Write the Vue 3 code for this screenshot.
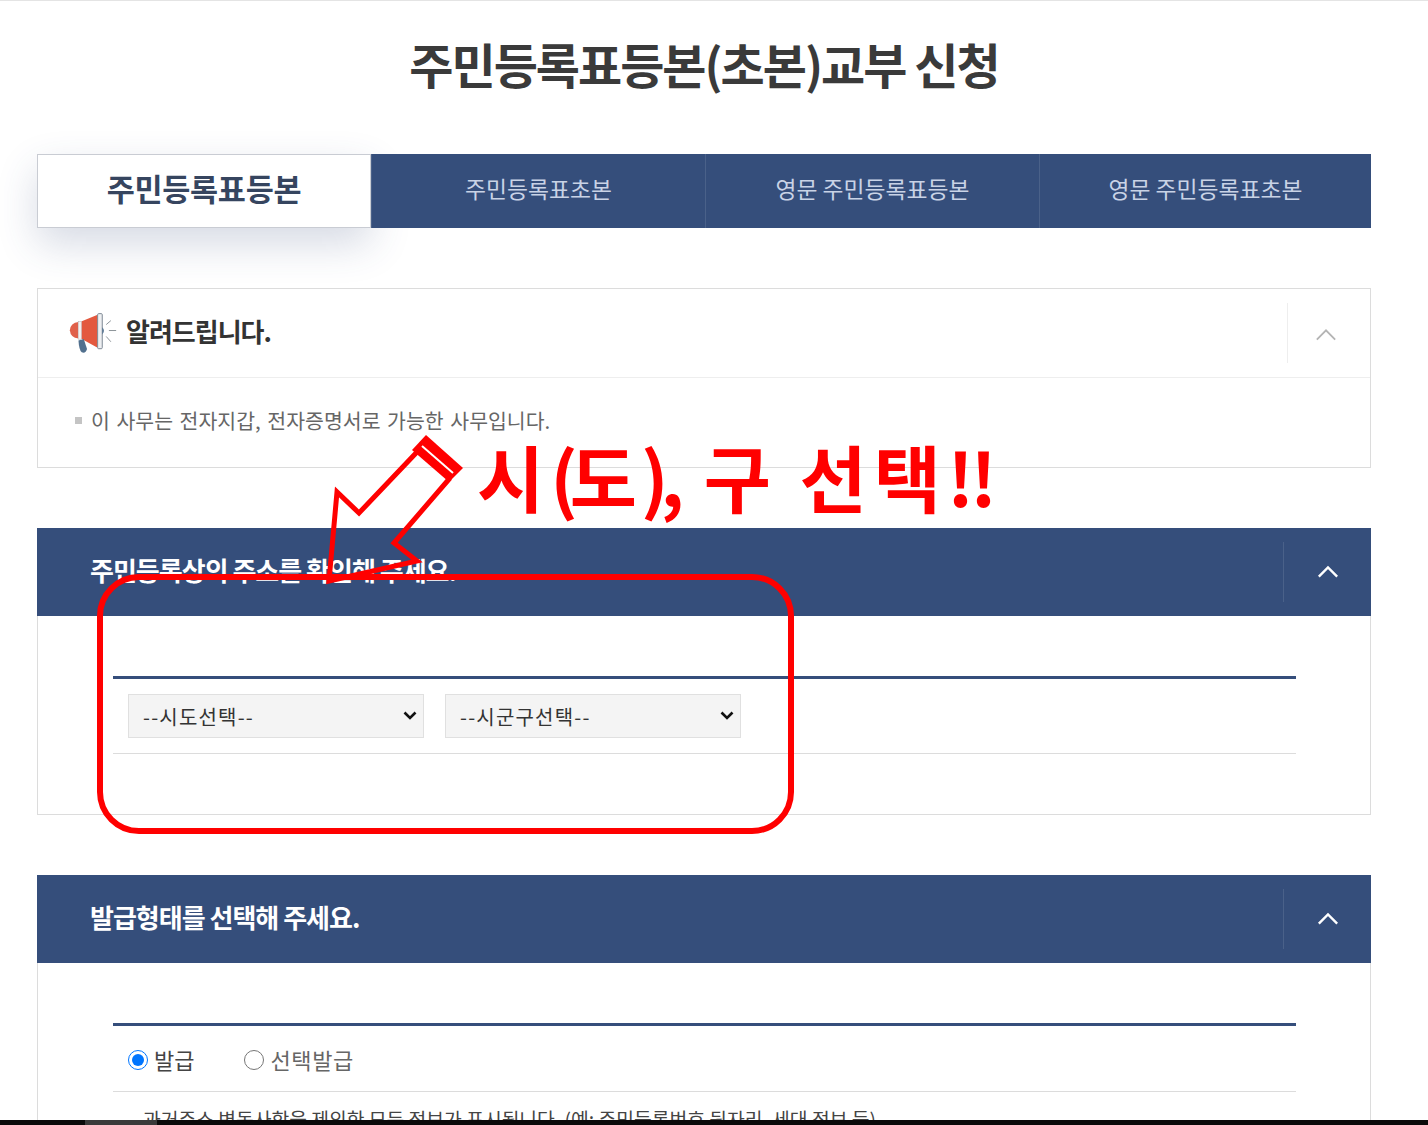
<script setup>
const tabs = [
  { label: '주민등록표등본', active: true },
  { label: '주민등록표초본', active: false },
  { label: '영문 주민등록표등본', active: false },
  { label: '영문 주민등록표초본', active: false }
]
</script>

<template>
  <div class="page">
    <main class="content">
      <h1 class="title">주민등록표등본(초본)교부 신청</h1>

      <nav class="tabs">
        <a v-for="tab in tabs" :key="tab.label" class="tab" :class="{ active: tab.active }">{{ tab.label }}</a>
      </nav>

      <section class="notice">
        <header class="notice-head">
          <svg class="horn" viewBox="25 20 150 130">
            <path d="M56 50 Q32 52 30 75 Q32 98 56 100Z" fill="#e0604a" />
            <rect x="55" y="48" width="11" height="54" fill="#f5f0ee" stroke="#8a9098" stroke-width="1" />
            <path d="M66 48 L114 28 L114 128 L66 102Z" fill="#e3593f" />
            <path d="M56 106 L72 102 L82 132 Q78 146 66 142 Q58 136 56 106Z" fill="#51708e" />
            <rect x="114" y="25" width="14" height="106" rx="3" fill="#eef0f2" stroke="#7d8793" stroke-width="3" />
            <path d="M128 66 Q138 76 128 88Z" fill="#51708e" />
            <path d="M140 58 L154 46 M148 76 L170 76 M140 94 L154 110" stroke="#8d9499" stroke-width="3" fill="none" />
          </svg>
          <h2 class="notice-title">알려드립니다.</h2>
          <div class="notice-toggle">
            <svg class="chev" viewBox="0 0 24 14"><path d="M2 12 L12 2 L22 12" /></svg>
          </div>
        </header>
        <div class="notice-body">
          <p class="notice-line">이 사무는 전자지갑, 전자증명서로 가능한 사무입니다.</p>
        </div>
      </section>

      <section class="panel">
        <header class="panel-head">
          <h2 class="panel-title">주민등록상의 주소를 확인해 주세요.</h2>
          <div class="panel-toggle">
            <svg class="chev light" viewBox="0 0 24 14"><path d="M2 12 L12 2 L22 12" /></svg>
          </div>
        </header>
        <div class="panel-body">
          <div class="form-row selects">
            <div class="sel-wrap">
              <select class="sel"><option>--시도선택--</option></select>
              <svg class="sel-arrow" viewBox="0 0 14 9"><path d="M1.5 1.5 L7 7 L12.5 1.5" /></svg>
            </div>
            <div class="sel-wrap">
              <select class="sel"><option>--시군구선택--</option></select>
              <svg class="sel-arrow" viewBox="0 0 14 9"><path d="M1.5 1.5 L7 7 L12.5 1.5" /></svg>
            </div>
          </div>
        </div>
      </section>

      <section class="panel last">
        <header class="panel-head">
          <h2 class="panel-title">발급형태를 선택해 주세요.</h2>
          <div class="panel-toggle">
            <svg class="chev light" viewBox="0 0 24 14"><path d="M2 12 L12 2 L22 12" /></svg>
          </div>
        </header>
        <div class="panel-body">
          <div class="form-row radios">
            <label class="radio"><input type="radio" name="kind" checked />발급</label>
            <label class="radio"><input type="radio" name="kind" />선택발급</label>
          </div>
          <p class="hint">과거주소 변동사항을 제외한 모든 정보가 표시됩니다. (예: 주민등록번호 뒷자리, 세대 정보 등)</p>
        </div>
      </section>
    </main>

    <footer class="taskbar"><span class="taskbar-seg"></span></footer>

    <!-- Annotation drawn over the screenshot -->
    <svg class="arrow" viewBox="0 0 1428 1125">
      <path class="arrow-line" d="M417 452 L359 513 L337 492 L329 581 L417 561 L394 543 L450 478" />
      <path d="M426 435 L463 468 L449 482 L412 450Z" fill="#ff0000" />
      <path d="M422 446 L453 473" stroke="#fff" stroke-width="2" fill="none" />
    </svg>
    <div class="callout">시<span class="c-paren">(</span><span class="c-do">도</span><span class="c-paren">)</span><span class="c-comma">,</span> 구 <span class="c-seon">선</span>택<span class="c-bang">!</span>!</div>
    <div class="highlight"></div>
  </div>
</template>

<style>
body { margin: 0; background: #fff; }
</style>

<style scoped>
* { box-sizing: border-box; }
.page {
  position: relative;
  width: 1428px;
  height: 1125px;
  overflow: hidden;
  display: flex;
  flex-direction: column;
  background: #fff;
  border-top: 1px solid #e4e4e4;
  font-family: "Noto Sans CJK KR", "Noto Sans", sans-serif;
  color: #333;
}
.content {
  flex: 1;
  min-height: 0;
  overflow: hidden;
  padding: 0 57px 0 37px;
}
.title {
  margin: 0;
  padding-top: 30px;
  height: 153px;
  font-size: 48px;
  line-height: 64px;
  font-weight: 700;
  text-align: center;
  color: #3a3a3a;
  letter-spacing: -2px;
}
.tabs {
  display: grid;
  grid-template-columns: 334px 334px 334px 332px;
  height: 74px;
  margin-bottom: 60px;
}
.tab {
  display: flex;
  align-items: center;
  justify-content: center;
  font-size: 22.8px;
  color: #c9d3e6;
  background: #354e7b;
  border-left: 1px solid #4a6189;
  padding-bottom: 6px;
}
.tab.active {
  background: #fff;
  border: 1px solid #c9ccd3;
  color: #36455f;
  font-size: 30.5px;
  font-weight: 700;
  letter-spacing: -0.3px;
  box-shadow: 0 16px 40px rgba(50, 70, 120, 0.2);
}
.notice {
  height: 180px;
  border: 1px solid #dcdcdc;
  margin-bottom: 60px;
}
.notice-head {
  display: flex;
  align-items: center;
  height: 89px;
  padding-left: 30px;
  border-bottom: 1px solid #eeeeee;
}
.horn { width: 50px; height: 43px; margin-right: 8px; }
.notice-title {
  flex: 1;
  margin: 0;
  padding-bottom: 6px;
  font-size: 26px;
  font-weight: 700;
  letter-spacing: -1px;
  color: #333;
}
.notice-toggle {
  width: 83px;
  height: 60px;
  border-left: 1px solid #eeeeee;
  display: flex;
  align-items: center;
  justify-content: center;
  padding-top: 3px;
  padding-right: 7px;
}
.chev { width: 22px; height: 14px; fill: none; stroke: #b4b4b4; stroke-width: 2; }
.chev.light { stroke: #fff; stroke-width: 2.6; }
.notice-body { padding: 27px 0 0 37px; }
.notice-line {
  position: relative;
  margin: 0;
  padding-left: 16px;
  font-size: 20.5px;
  line-height: 30px;
  word-spacing: 2px;
  color: #666;
}
.notice-line::before {
  content: "";
  position: absolute;
  left: 0;
  top: 12px;
  width: 7px;
  height: 7px;
  background: #c4c4c4;
}
.panel {
  border: 1px solid #dcdcdc;
  border-top: 0;
  height: 287px;
  margin-bottom: 60px;
}
.panel.last { height: 400px; margin-bottom: 0; }
.panel-head {
  display: flex;
  align-items: center;
  height: 88px;
  margin: 0 -1px;
  padding-left: 53px;
  background: #354e7b;
}
.panel-title {
  flex: 1;
  margin: 0;
  padding-bottom: 6px;
  font-size: 26px;
  font-weight: 700;
  letter-spacing: -1px;
  color: #fff;
}
.panel-toggle {
  width: 88px;
  height: 60px;
  border-left: 1px solid #4a6189;
  display: flex;
  align-items: center;
  justify-content: center;
}
.panel-body { padding: 60px 74px 0 75px; }
.form-row {
  border-top: 3px solid #354e7b;
  border-bottom: 1px solid #dcdcdc;
  display: flex;
  align-items: center;
  padding-left: 15px;
}
.selects { height: 78px; gap: 21px; padding-bottom: 1px; }
.sel-wrap { position: relative; width: 296px; height: 44px; }
.sel {
  width: 100%;
  height: 100%;
  padding: 1px 0 0 14px;
  appearance: none;
  background-color: #f4f4f4;
  border: 1px solid #e0e0e0;
  border-radius: 0;
  font-family: inherit;
  font-size: 20px;
  letter-spacing: 1.2px;
  color: #333;
}
.sel-arrow {
  position: absolute;
  right: 7px;
  top: 17px;
  width: 14px;
  height: 9px;
  fill: none;
  stroke: #111;
  stroke-width: 2.6;
}
.radios { height: 69px; gap: 50px; }
.radio {
  display: flex;
  align-items: center;
  font-size: 22px;
  color: #444;
}
.radio input { width: 20px; height: 20px; margin: 2px 6px 0 0; }
.radios .radio:last-child { color: #666; letter-spacing: 0.6px; }
.hint {
  margin: 14px 0 0 30px;
  font-size: 19.3px;
  line-height: 26px;
  color: #444;
  white-space: nowrap;
}
.taskbar {
  position: relative;
  height: 5px;
  background: #0a0a0a;
}
.taskbar-seg {
  position: absolute;
  left: 85px;
  top: 0;
  width: 72px;
  height: 5px;
  background: #3a3a3a;
}
.arrow {
  position: absolute;
  left: 0;
  top: -1px;
  width: 1428px;
  height: 1125px;
  pointer-events: none;
}
.arrow-line { fill: none; stroke: #ff0000; stroke-width: 5; }
.callout {
  position: absolute;
  left: 477px;
  top: 439px;
  font-size: 73px;
  line-height: 70px;
  font-weight: 700;
  letter-spacing: 6px;
  color: #ff0000;
  white-space: nowrap;
}
.c-paren { letter-spacing: -8px; }
.c-do { letter-spacing: 4px; }
.c-seon { letter-spacing: 7px; }
.c-comma { letter-spacing: -3px; }
.c-bang { letter-spacing: -4px; }
.highlight {
  position: absolute;
  left: 97px;
  top: 573px;
  width: 697px;
  height: 260px;
  border: 6px solid #ff0000;
  border-radius: 42px;
  pointer-events: none;
}
</style>
